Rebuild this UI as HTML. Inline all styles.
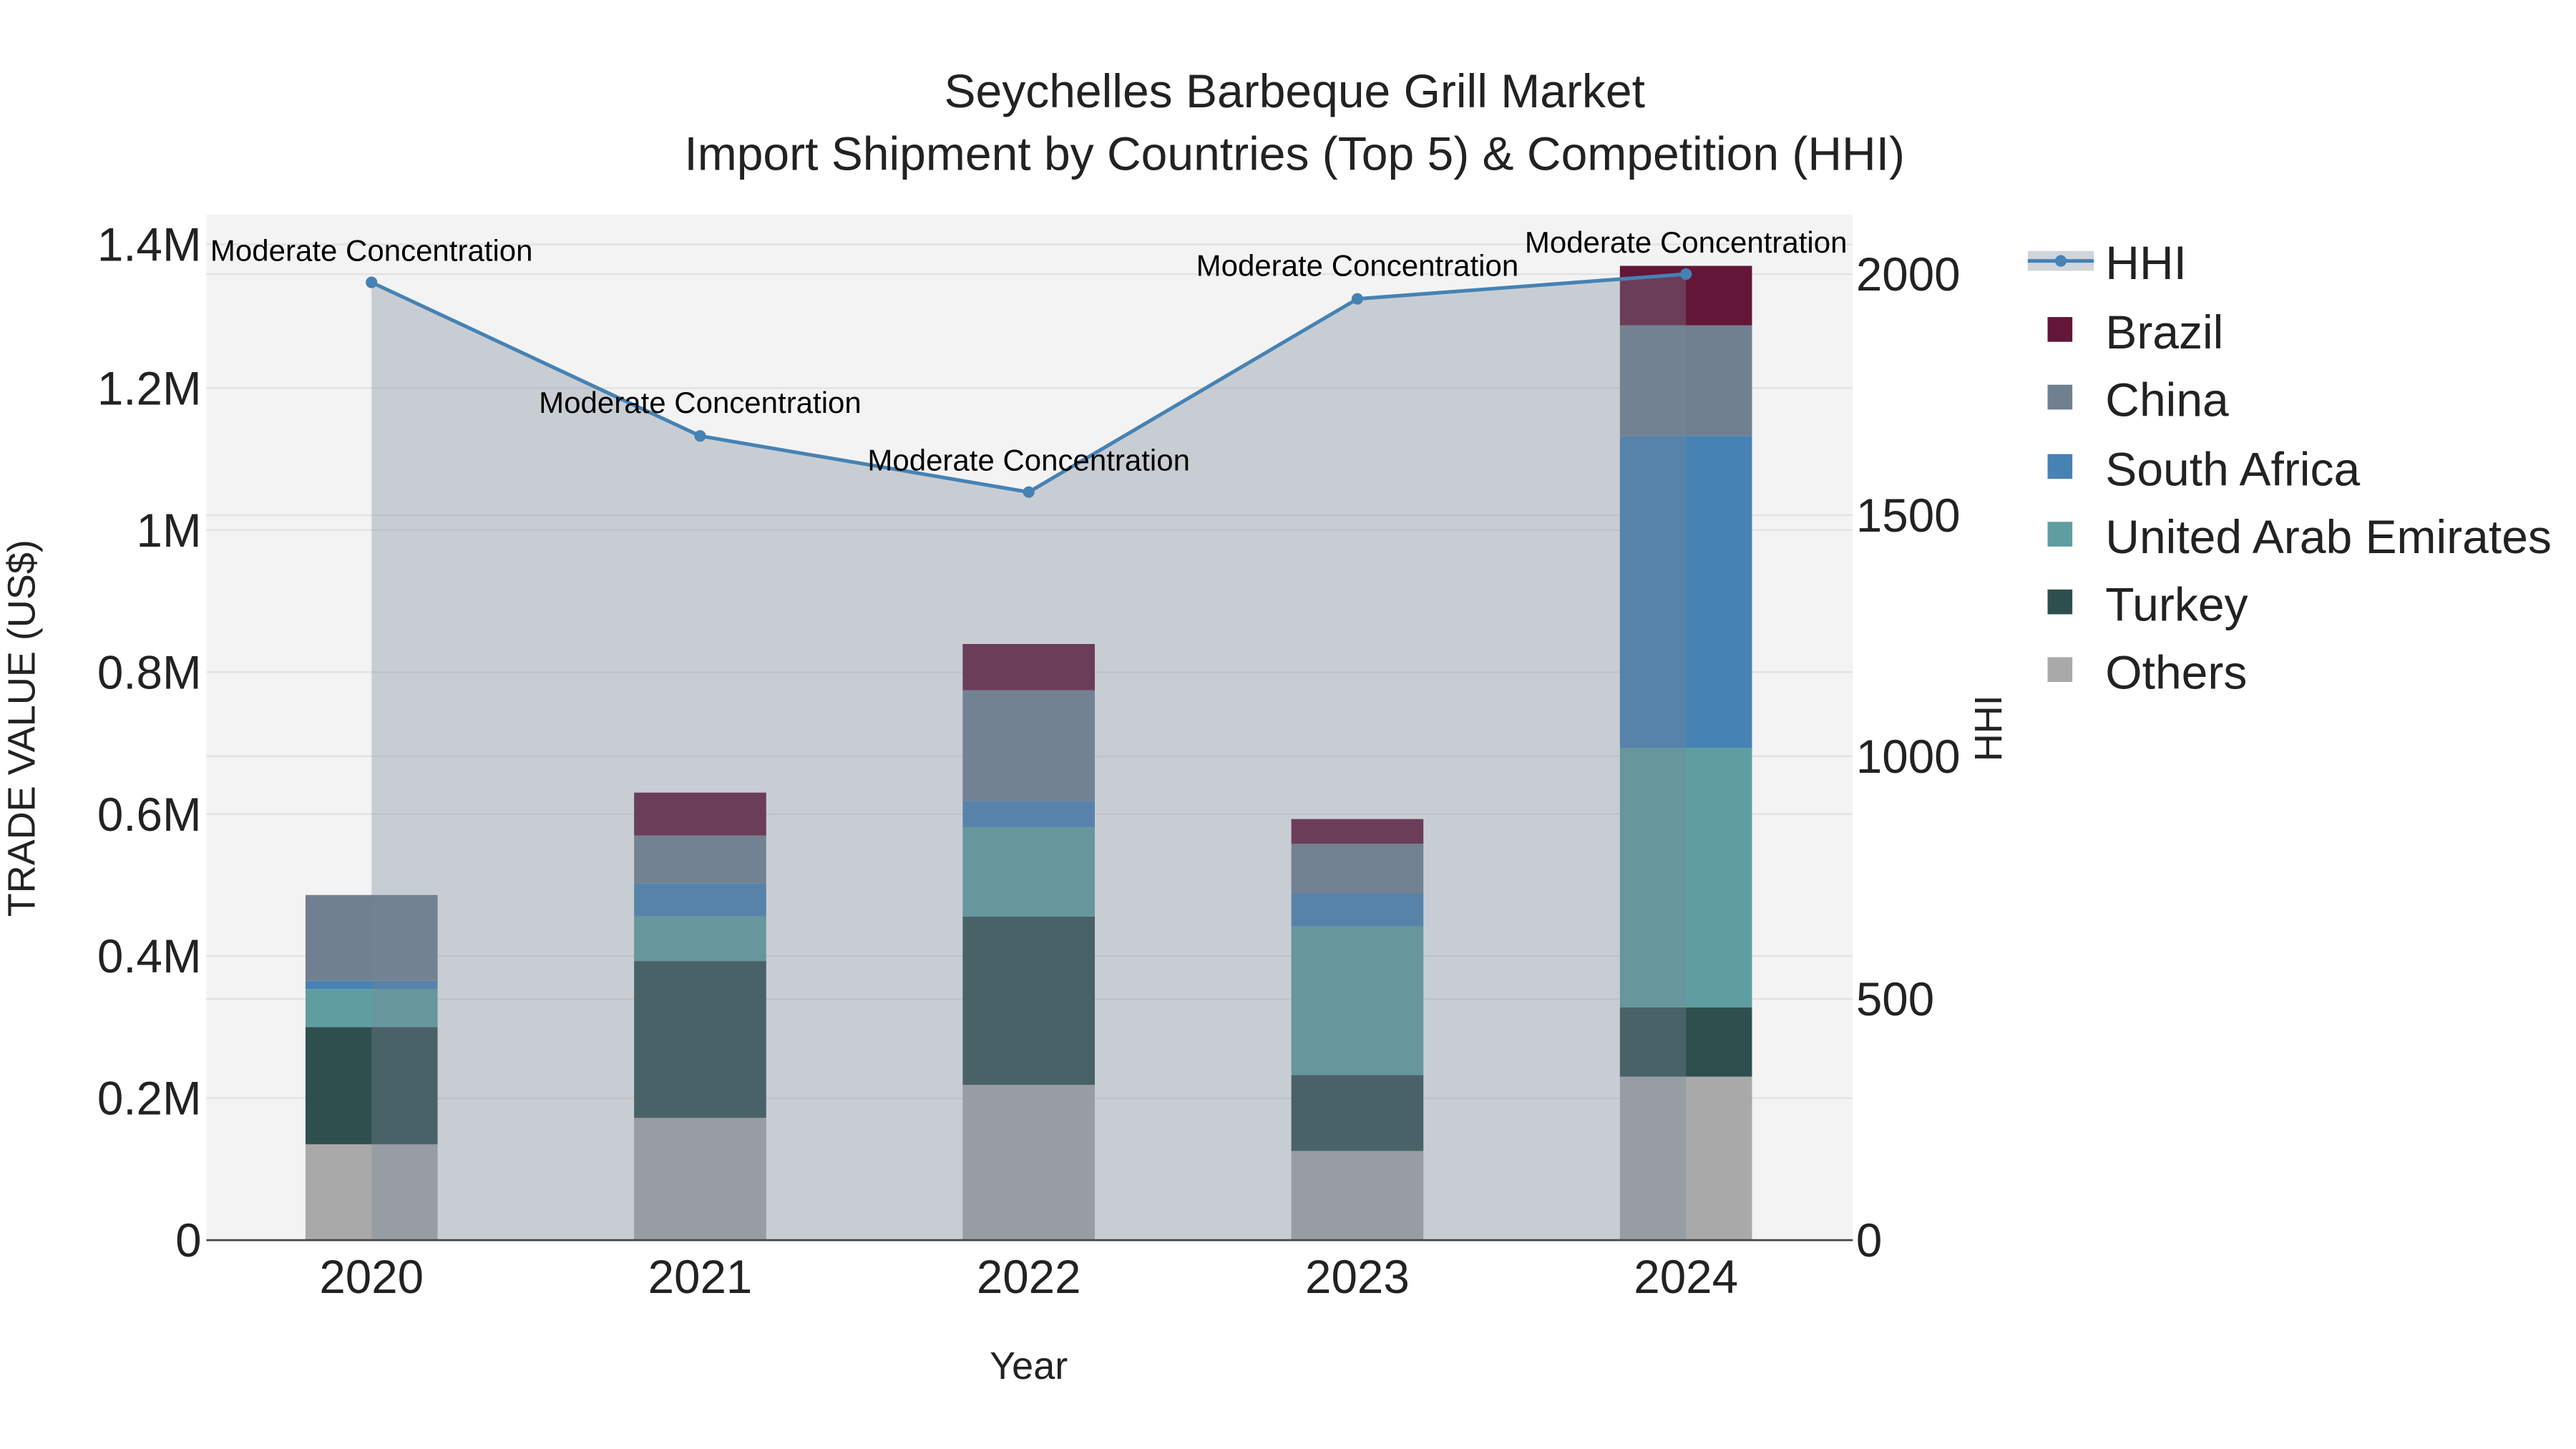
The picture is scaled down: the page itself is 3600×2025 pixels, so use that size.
<!DOCTYPE html>
<html><head><meta charset="utf-8"><style>html,body{margin:0;padding:0;background:#fff}svg{display:block}</style></head>
<body>
<svg width="3600" height="2025" viewBox="0 0 1560 877.5" xmlns="http://www.w3.org/2000/svg" font-family="Liberation Sans, Arial, sans-serif">
<rect width="1560" height="877.5" fill="#fff"/>
<rect x="125" y="130" width="997" height="621" fill="#f3f3f3"/>
<g stroke="#e2e2e2" stroke-width="1">
<line x1="125" x2="1122" y1="665" y2="665"/><line x1="125" x2="1122" y1="579" y2="579"/>
<line x1="125" x2="1122" y1="493" y2="493"/><line x1="125" x2="1122" y1="407" y2="407"/>
<line x1="125" x2="1122" y1="321" y2="321"/><line x1="125" x2="1122" y1="235" y2="235"/>
<line x1="125" x2="1122" y1="148" y2="148"/>
<line x1="125" x2="1122" y1="605" y2="605"/><line x1="125" x2="1122" y1="458" y2="458"/>
<line x1="125" x2="1122" y1="312" y2="312"/><line x1="125" x2="1122" y1="166" y2="166"/>
</g>
<g>
<rect x="185" y="693" width="80" height="58" fill="#a9a9a9"/>
<rect x="185" y="622" width="80" height="71" fill="#2f4f4f"/>
<rect x="185" y="599" width="80" height="23" fill="#5f9ea0"/>
<rect x="185" y="594" width="80" height="5" fill="#4682b4"/>
<rect x="185" y="542" width="80" height="52" fill="#708090"/>

<rect x="384" y="677" width="80" height="74" fill="#a9a9a9"/>
<rect x="384" y="582" width="80" height="95" fill="#2f4f4f"/>
<rect x="384" y="555" width="80" height="27" fill="#5f9ea0"/>
<rect x="384" y="535" width="80" height="20" fill="#4682b4"/>
<rect x="384" y="506" width="80" height="29" fill="#708090"/>
<rect x="384" y="480" width="80" height="26" fill="#641638"/>

<rect x="583" y="657" width="80" height="94" fill="#a9a9a9"/>
<rect x="583" y="555" width="80" height="102" fill="#2f4f4f"/>
<rect x="583" y="501" width="80" height="54" fill="#5f9ea0"/>
<rect x="583" y="485" width="80" height="16" fill="#4682b4"/>
<rect x="583" y="418" width="80" height="67" fill="#708090"/>
<rect x="583" y="390" width="80" height="28" fill="#641638"/>

<rect x="782" y="697" width="80" height="54" fill="#a9a9a9"/>
<rect x="782" y="651" width="80" height="46" fill="#2f4f4f"/>
<rect x="782" y="561" width="80" height="90" fill="#5f9ea0"/>
<rect x="782" y="541" width="80" height="20" fill="#4682b4"/>
<rect x="782" y="511" width="80" height="30" fill="#708090"/>
<rect x="782" y="496" width="80" height="15" fill="#641638"/>

<rect x="981" y="652" width="80" height="99" fill="#a9a9a9"/>
<rect x="981" y="610" width="80" height="42" fill="#2f4f4f"/>
<rect x="981" y="453" width="80" height="157" fill="#5f9ea0"/>
<rect x="981" y="264" width="80" height="189" fill="#4682b4"/>
<rect x="981" y="197" width="80" height="67" fill="#708090"/>
<rect x="981" y="161" width="80" height="36" fill="#641638"/>
</g>
<polygon points="225,751 225,171 424,264 623,298 822,181 1021,166 1021,751" fill="rgba(119,136,153,0.35)"/>
<polyline points="225,171 424,264 623,298 822,181 1021,166" fill="none" stroke="#4682b4" stroke-width="2.2"/>
<g fill="#4682b4"><circle cx="225" cy="171" r="3.5"/><circle cx="424" cy="264" r="3.5"/><circle cx="623" cy="298" r="3.5"/><circle cx="822" cy="181" r="3.5"/><circle cx="1021" cy="166" r="3.5"/></g>
<g font-size="18.2" fill="#000" text-anchor="middle">
<text x="225" y="158">Moderate Concentration</text>
<text x="424" y="250">Moderate Concentration</text>
<text x="623" y="285">Moderate Concentration</text>
<text x="822" y="167">Moderate Concentration</text>
<text x="1021" y="153">Moderate Concentration</text>
</g>
<line x1="125" x2="1122" y1="751" y2="751" stroke="#444" stroke-width="1.2"/>
<g font-size="28.4" fill="#222" text-anchor="end">
<text x="122" y="761">0</text><text x="122" y="675">0.2M</text><text x="122" y="589">0.4M</text>
<text x="122" y="503">0.6M</text><text x="122" y="417">0.8M</text><text x="122" y="331">1M</text>
<text x="122" y="245">1.2M</text><text x="122" y="158">1.4M</text>
</g>
<g font-size="28.4" fill="#222" text-anchor="start">
<text x="1124" y="761">0</text><text x="1124" y="615">500</text><text x="1124" y="468">1000</text>
<text x="1124" y="322">1500</text><text x="1124" y="176">2000</text>
</g>
<g font-size="28.4" fill="#222" text-anchor="middle">
<text x="225" y="783">2020</text><text x="424" y="783">2021</text><text x="623" y="783">2022</text>
<text x="822" y="783">2023</text><text x="1021" y="783">2024</text>
</g>
<text x="623" y="835" font-size="23.4" text-anchor="middle" fill="#222">Year</text>
<text transform="translate(21,441) rotate(-90)" font-size="23.4" text-anchor="middle" fill="#222">TRADE VALUE (US$)</text>
<text transform="translate(1212,441) rotate(-90)" font-size="23.4" text-anchor="middle" fill="#222">HHI</text>
<g font-size="28.6" fill="#222" text-anchor="middle">
<text x="784" y="65">Seychelles Barbeque Grill Market</text>
<text x="784" y="103">Import Shipment by Countries (Top 5) &amp; Competition (HHI)</text>
</g>
<rect x="1228" y="152" width="40" height="12" fill="rgba(119,136,153,0.35)"/>
<line x1="1228" x2="1268" y1="158" y2="158" stroke="#4682b4" stroke-width="2.2"/>
<circle cx="1248" cy="158" r="3.5" fill="#4682b4"/>
<rect x="1240" y="192" width="15" height="15" fill="#641638"/>
<rect x="1240" y="233" width="15" height="15" fill="#708090"/>
<rect x="1240" y="275" width="15" height="15" fill="#4682b4"/>
<rect x="1240" y="316" width="15" height="15" fill="#5f9ea0"/>
<rect x="1240" y="357" width="15" height="15" fill="#2f4f4f"/>
<rect x="1240" y="398" width="15" height="15" fill="#a9a9a9"/>
<g font-size="28.6" fill="#222">
<text x="1275" y="169">HHI</text><text x="1275" y="211">Brazil</text><text x="1275" y="252">China</text>
<text x="1275" y="294">South Africa</text><text x="1275" y="335">United Arab Emirates</text>
<text x="1275" y="376">Turkey</text><text x="1275" y="417">Others</text>
</g>
</svg>
</body></html>
